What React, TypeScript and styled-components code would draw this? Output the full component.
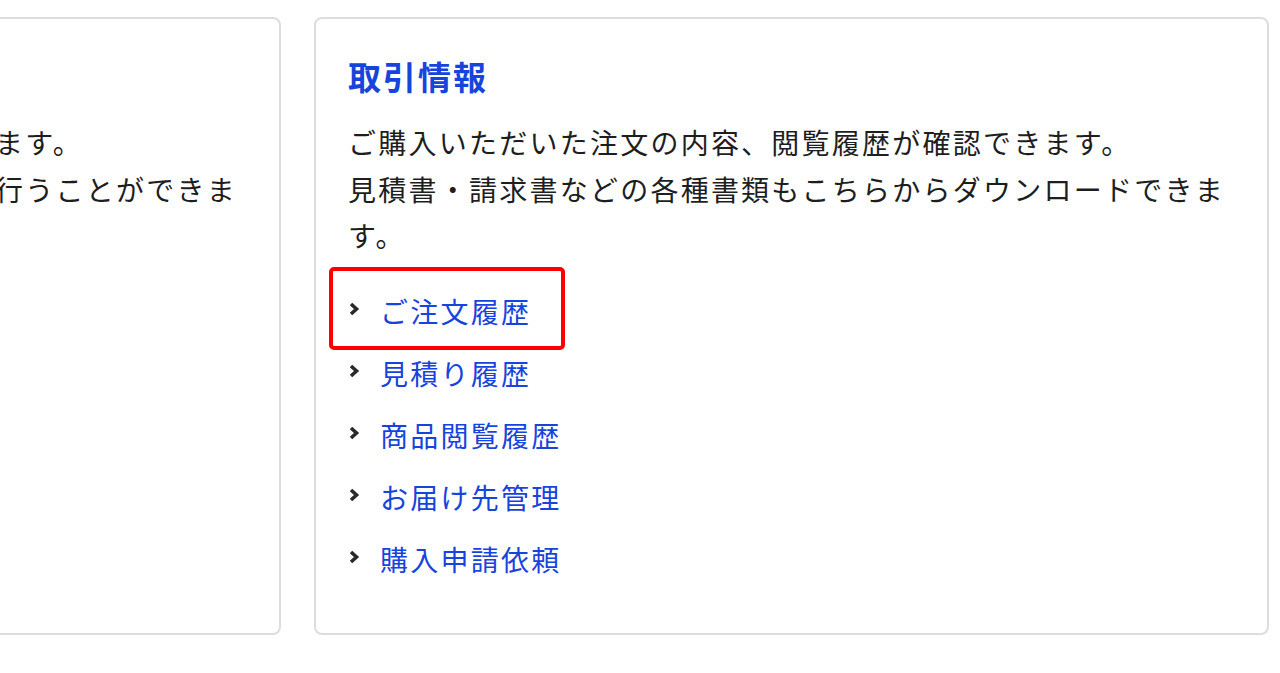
import React from "react";
import styled, { createGlobalStyle } from "styled-components";

const GlobalStyle = createGlobalStyle`
  html, body {
    margin: 0;
    padding: 0;
    background: #ffffff;
    overflow: hidden;
  }
  body {
    font-family: "Noto Sans CJK JP", "Noto Sans", sans-serif;
    color: #222222;
  }
`;

const Row = styled.div`
  display: flex;
  justify-content: flex-end;
  align-items: stretch;
  gap: 33px;
  padding: 17px 11px 38px 0;
  width: 1280px;
  box-sizing: border-box;
`;

const Card = styled.section`
  flex: 0 0 955px;
  box-sizing: border-box;
  border: 2px solid #dddddd;
  border-radius: 8px;
  background: #ffffff;
  padding: 33px 32px 43px;
`;

const Title = styled.h2`
  margin: 0 0 19px;
  font-size: 33px;
  line-height: 48px;
  font-weight: 700;
  letter-spacing: 0.06em;
  color: #1744dc;
`;

const Description = styled.p`
  margin: 0 0 21px;
  font-size: 28px;
  line-height: 46.5px;
  letter-spacing: 0.08em;
  color: #1e1e1e;
`;

const LinkList = styled.ul`
  list-style: none;
  margin: 0;
  padding: 0;
`;

const LinkItem = styled.li`
  position: relative;
  display: flex;
  align-items: center;
  height: 62px;
`;

const Chevron = styled.svg`
  flex: 0 0 auto;
  width: 12px;
  height: 14px;
  margin-right: 20px;
  margin-top: -4px;
`;

const LinkText = styled.a`
  font-size: 28px;
  line-height: 40px;
  letter-spacing: 0.08em;
  color: #1744dc;
  text-decoration: none;
`;

const Highlight = styled.span`
  position: absolute;
  left: -19px;
  top: -13px;
  width: 236px;
  height: 83px;
  box-sizing: border-box;
  border: 4px solid #ff0000;
  border-radius: 5px;
  pointer-events: none;
`;

const links = [
  "ご注文履歴",
  "見積り履歴",
  "商品閲覧履歴",
  "お届け先管理",
  "購入申請依頼",
];

const ChevronIcon = () => (
  <Chevron viewBox="0 0 12 14" aria-hidden="true">
    <polyline
      points="3,2 8.5,7 3,12"
      fill="none"
      stroke="#2a2a2a"
      strokeWidth="3.6"
      strokeLinecap="butt"
      strokeLinejoin="miter"
    />
  </Chevron>
);

export default function App() {
  return (
    <>
      <GlobalStyle />
      <Row>
        <Card>
          <Title>会員情報</Title>
          <Description>
            会員登録済みのお客様情報の確認・変更ができます。
            <br />
            パスワード変更やメールマガジンの配信設定も行うことができます。
          </Description>
        </Card>
        <Card>
          <Title>取引情報</Title>
          <Description>
            ご購入いただいた注文の内容、閲覧履歴が確認できます。
            <br />
            見積書・請求書などの各種書類もこちらからダウンロードできます。
          </Description>
          <LinkList>
            {links.map((label, i) => (
              <LinkItem key={label}>
                <ChevronIcon />
                <LinkText href="#">{label}</LinkText>
                {i === 0 && <Highlight />}
              </LinkItem>
            ))}
          </LinkList>
        </Card>
      </Row>
    </>
  );
}
